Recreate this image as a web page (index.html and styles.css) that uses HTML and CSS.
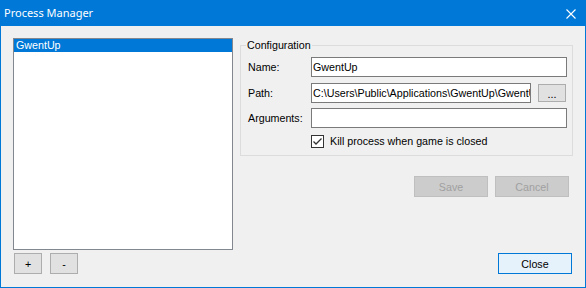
FILE: index.html
```html
<!DOCTYPE html>
<html lang="en">

<head>
    <meta charset="utf-8">
    <title>Process Manager</title>
    <link rel="stylesheet" href="styles.css">
</head>

<body>
    <div class="window">
        <!-- titelbar med luk-kryds -->
        <header class="titlebar">
            <span class="title">Process Manager</span>
            <svg class="close-x" width="10" height="10" viewBox="0 0 10 10">
                <path d="M0.5 0.5 L9.5 9.5 M9.5 0.5 L0.5 9.5" stroke="#ffffff" stroke-width="1.1" fill="none" />
            </svg>
        </header>

        <main class="client">
            <div class="listbox">
                <div class="item selected">GwentUp</div>
            </div>

            <div class="right">
                <fieldset class="group">
                    <legend>Configuration</legend>
                    <div class="row row-name">
                        <label>Name:</label>
                        <input class="textbox" type="text" value="GwentUp">
                    </div>
                    <div class="row row-path">
                        <label>Path:</label>
                        <input class="textbox" type="text" value="C:\Users\Public\Applications\GwentUp\GwentUp.exe">
                        <button class="btn btn-browse">...</button>
                    </div>
                    <div class="row row-args">
                        <label>Arguments:</label>
                        <input class="textbox" type="text" value="">
                    </div>
                    <div class="row row-check">
                        <span class="checkbox">
                            <svg width="11" height="11" viewBox="0 0 11 11">
                                <path d="M1.5 5.5 L4 8 L9.5 2.5" stroke="#333333" stroke-width="1.3" fill="none" />
                            </svg>
                        </span>
                        <span class="check-label">Kill process when game is closed</span>
                    </div>
                </fieldset>

                <div class="actions">
                    <button class="btn btn-wide" disabled>Save</button>
                    <button class="btn btn-wide" disabled>Cancel</button>
                </div>
            </div>

            <div class="list-buttons">
                <button class="btn btn-small">+</button>
                <button class="btn btn-small">-</button>
            </div>

            <div class="bottom-right">
                <button class="btn btn-wide btn-default">Close</button>
            </div>
        </main>
    </div>
</body>

</html>
```

FILE: styles.css
```css
body {
    margin: 0;
    font-family: "Liberation Sans", Arial, sans-serif;
    font-size: 10.7px;
    color: #000000;
}

.window {
    width: 586px;
    height: 288px;
    box-sizing: border-box;
    border: 1px solid #0078d7;
    border-top: none;
    background-color: #f0f0f0;
    display: flex;
    flex-direction: column;
}

.titlebar {
    height: 26px;
    margin: 0 -1px;
    background-color: #0078d7;
    color: #ffffff;
    display: flex;
    align-items: center;
    justify-content: space-between;
    padding: 0 10px 0 4px;
}

.title {
    font-family: "Noto Sans", sans-serif;
    font-size: 11px;
    line-height: 26px;
}

.close-x {
    margin-top: 1px;
}

.client {
    flex: 1;
    display: grid;
    grid-template-columns: 220px 333px;
    grid-template-rows: 212px 21px;
    column-gap: 7px;
    row-gap: 3px;
    padding: 12px 12px 13px 12px;
}

.listbox {
    background-color: #ffffff;
    border: 1px solid #828790;
    box-sizing: border-box;
}

.item {
    height: 13px;
    line-height: 13px;
    padding-left: 2px;
}

.selected {
    background-color: #0078d7;
    color: #ffffff;
}

.right {
    display: flex;
    flex-direction: column;
}

.group {
    margin: 1px 0 0 0;
    padding: 5px 5px 7px 7px;
    border: 1px solid #dcdcdc;
    min-width: 0;
}

.group legend {
    padding: 0 1px;
    margin-left: -2px;
    line-height: 13px;
}

.row {
    display: flex;
    align-items: center;
    height: 20px;
}

.row label {
    width: 63px;
    flex: none;
}

.row-name {
    margin-bottom: 6px;
}

.row-path {
    margin-bottom: 5px;
}

.row-args {
    margin-bottom: 7px;
}

.textbox {
    flex: 1;
    min-width: 0;
    height: 20px;
    box-sizing: border-box;
    border: 1px solid #7a7a7a;
    background-color: #ffffff;
    padding: 0 0 0 1px;
    margin: 0;
    font-family: "Liberation Sans", Arial, sans-serif;
    font-size: 10.7px;
    color: #000000;
    outline: none;
}

.row-check {
    height: 13px;
    padding-left: 63px;
}

.checkbox {
    width: 13px;
    height: 13px;
    box-sizing: border-box;
    border: 1px solid #333333;
    background-color: #ffffff;
    display: inline-flex;
    margin-right: 6px;
}

.check-label {
    line-height: 13px;
}

.btn {
    font-family: "Liberation Sans", Arial, sans-serif;
    font-size: 10.7px;
    color: #000000;
    background-color: #e1e1e1;
    border: 1px solid #adadad;
    border-radius: 0;
    padding: 0;
    margin: 0;
    box-sizing: border-box;
    height: 21px;
}

.btn:disabled {
    background-color: #cccccc;
    border-color: #bfbfbf;
    color: #a0a0a0;
}

.btn-browse {
    width: 28px;
    height: 18px;
    margin-left: 7px;
    margin-right: 1px;
    line-height: 18px;
}

.btn-wide {
    width: 74px;
}

.btn-small {
    width: 28px;
}

.btn-default {
    background-color: #e5f1fb;
    border-color: #0078d7;
}

.actions {
    display: flex;
    justify-content: flex-end;
    gap: 7px;
    margin-top: 20px;
    margin-right: 4px;
}

.list-buttons {
    display: flex;
    gap: 8px;
    padding-left: 1px;
}

.bottom-right {
    display: flex;
    justify-content: flex-end;
    padding-right: 1px;
}
```
